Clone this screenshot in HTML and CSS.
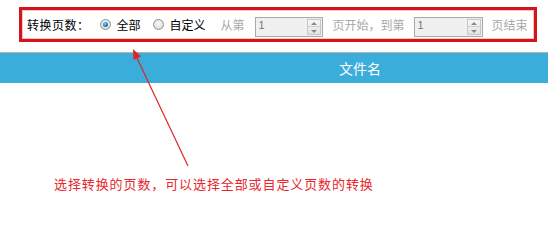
FILE: index.html
```html
<!DOCTYPE html>
<html lang="zh-CN">
<head>
<meta charset="utf-8">
<title>转换页数</title>
<link rel="stylesheet" href="styles.css">
</head>
<body>
<div class="page">
  <div class="panel">
    <span class="label">转换页数：</span>
    <span class="radio radio-on"></span>
    <span class="opt opt-all">全部</span>
    <span class="radio radio-off"></span>
    <span class="opt opt-custom">自定义</span>
    <span class="muted from">从第</span>
    <span class="spin spin-a"><span class="spin-val">1</span><span class="spin-btn"><i class="up"></i><i class="down"></i></span></span>
    <span class="muted mid">页开始，到第</span>
    <span class="spin spin-b"><span class="spin-val">1</span><span class="spin-btn"><i class="up"></i><i class="down"></i></span></span>
    <span class="muted end">页结束</span>
  </div>
  <div class="thead">
    <span class="th-name">文件名</span>
  </div>
  <p class="note">选择转换的页数，可以选择全部或自定义页数的转换</p>
  <svg class="arrow" width="548" height="245" viewBox="0 0 548 245">
    <line x1="188" y1="166" x2="136" y2="56" stroke="#e02424" stroke-width="1.2"/>
    <polygon points="133,49 141,56.5 133.5,60" fill="#e02424"/>
  </svg>
</div>
</body>
</html>
```
FILE: styles.css
```css
html, body {
  margin: 0;
  padding: 0;
  background: #fff;
}
body {
  font-family: "Noto Sans CJK SC", "Noto Sans", sans-serif;
  font-size: 12px;
  color: #000;
}
.page {
  position: relative;
  width: 548px;
  height: 245px;
  overflow: hidden;
}
.panel {
  box-sizing: border-box;
  margin: 7px 11px 0 19px;
  height: 35px;
  border: 3px solid #d4151c;
  box-shadow: inset 0 0 0 1px #f4c4c6;
  display: flex;
  align-items: center;
  padding-left: 5px;
  white-space: nowrap;
  line-height: 16px;
}
.label { font-size: 12px; letter-spacing: 0.5px; }
.radio {
  box-sizing: border-box;
  width: 11px;
  height: 11px;
  border-radius: 50%;
  border: 1px solid #8e8f8f;
  background: radial-gradient(circle at 50% 40%, #fafafa 0, #e2e2e2 60%, #cfcfcf 100%);
  display: inline-block;
  position: relative;
}
.radio-on {
  margin-left: 10px;
}
.radio-on::after {
  content: "";
  position: absolute;
  left: 2px;
  top: 2px;
  width: 5px;
  height: 5px;
  border-radius: 50%;
  background: radial-gradient(circle at 40% 35%, #7fd0f4 0, #1f7fc0 55%, #0f4f86 100%);
}
.radio-off { margin-left: 12px; }
.opt-all { margin-left: 6px; }
.opt-custom { margin-left: 6px; }
.muted { color: #a8a8a8; }
.from { margin-left: 15px; }
.mid { margin-left: 10px; }
.end { margin-left: 9px; }
.spin {
  box-sizing: border-box;
  display: inline-flex;
  height: 20px;
  border: 1px solid #a9a9a9;
  background: #f0f0f0;
  margin-top: 4px;
}
.spin-a { width: 68px; margin-left: 10px; }
.spin-b { width: 69px; margin-left: 9px; }
.spin-val {
  flex: 1;
  color: #777;
  font-family: "Liberation Sans", sans-serif;
  font-size: 11px;
  line-height: 14px;
  padding-left: 3px;
}
.spin-btn {
  box-sizing: border-box;
  width: 14px;
  margin: 1px 1px 1px 0;
  border: 1px solid #c6c6c6;
  background: linear-gradient(#f7f7f7, #e4e4e4);
  display: flex;
  flex-direction: column;
}
.spin-btn i {
  flex: 1;
  position: relative;
}
.spin-btn .up { border-bottom: 1px solid #cfcfcf; }
.spin-btn i::after {
  content: "";
  position: absolute;
  left: 3px;
  top: 2px;
  border-left: 3px solid transparent;
  border-right: 3px solid transparent;
}
.spin-btn .up::after { border-bottom: 3px solid #8a8a8a; }
.spin-btn .down::after { border-top: 3px solid #8a8a8a; top: 3px; }
.thead {
  margin-top: 10px;
  height: 30px;
  border-top: 1px solid #b3b3b3;
  background: #3badda;
  color: #fff;
  font-size: 14px;
  line-height: 30px;
  padding-left: 339px;
}
.note {
  margin: 92px 0 0 54px;
  font-size: 13px;
  line-height: 18px;
  letter-spacing: 0.9px;
  color: #e8262b;
}
.arrow {
  position: absolute;
  left: 0;
  top: 0;
  pointer-events: none;
}
```
